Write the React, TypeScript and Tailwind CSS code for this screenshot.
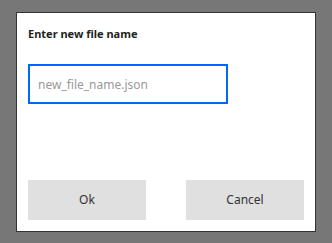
import React, { useState } from 'react';

const App: React.FC = () => {
  const [name, setName] = useState('');

  return (
    <div className="w-[332px] h-[243px] bg-[#777777] pt-3 pl-4" style={{ fontFamily: '"Noto Sans", "Open Sans", sans-serif' }}>
      <div className="w-[300px] h-[220px] bg-white border border-[#333333] px-[11px] pt-[11px] pb-[11px] flex flex-col">
        <h2 className="text-[11px] font-bold text-[#222222] leading-5">Enter new file name</h2>
        <input
          autoFocus
          value={name}
          onChange={e => setName(e.target.value)}
          placeholder="new_file_name.json"
          className="mt-[20px] w-[200px] h-[40px] border-2 border-[#0066ff] px-2 text-[12px] text-[#333333] placeholder:text-[#999999] outline-none"
        />
        <div className="mt-auto flex justify-between">
          <button className="w-[118px] h-[40px] bg-[#e0e0e0] text-[12px] text-[#333333]">Ok</button>
          <button className="w-[118px] h-[40px] bg-[#e0e0e0] text-[12px] text-[#333333]">Cancel</button>
        </div>
      </div>
    </div>
  );
};

export default App;
